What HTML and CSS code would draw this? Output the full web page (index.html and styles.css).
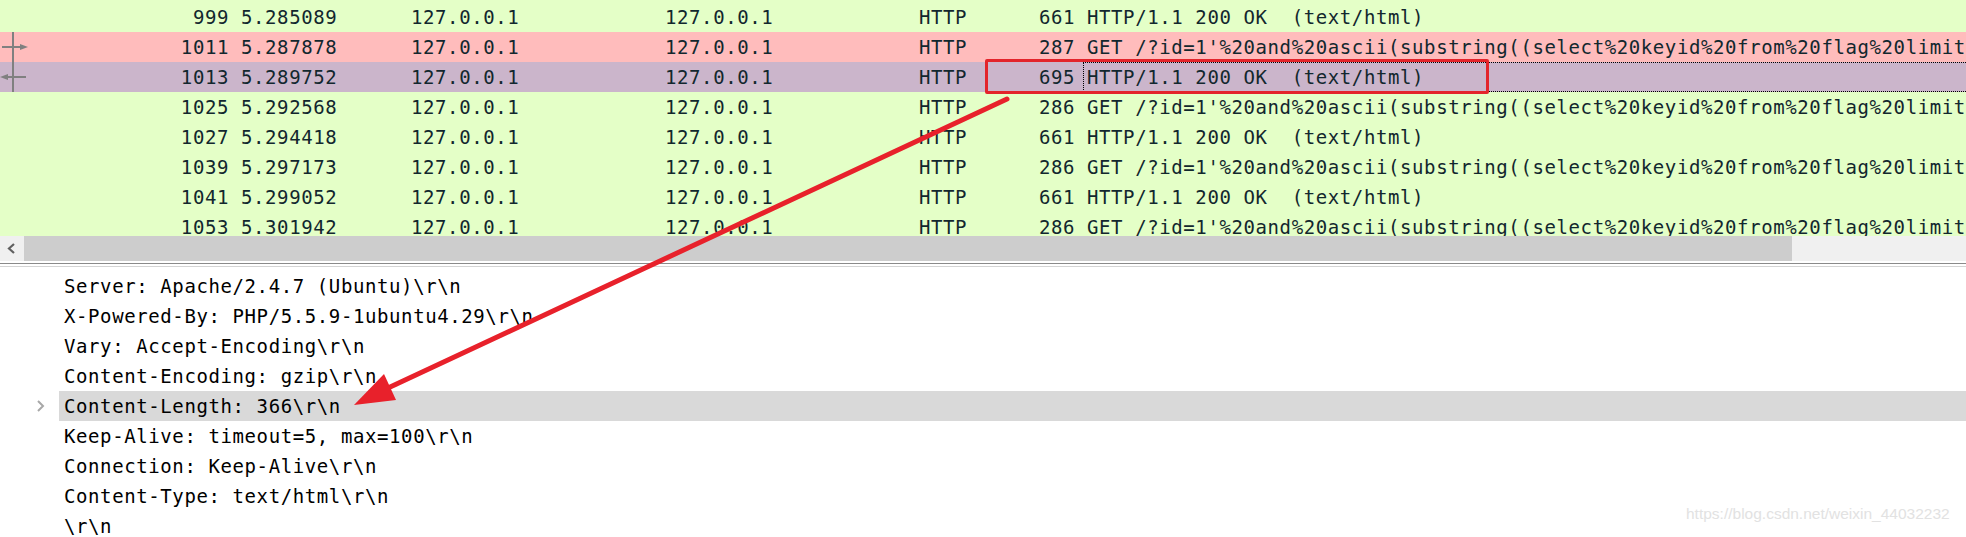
FILE: index.html
```html
<!DOCTYPE html>
<html lang="en">
<head>
	<meta charset="utf-8">
	<title>Wireshark - HTTP</title>
	<link rel="stylesheet" href="styles.css">
</head>
<body>
	<div class="page">
		<div class="packetList">
			<div class="row green">
				<div class="c mark"></div><div class="c no">999</div><div class="c time">5.285089</div><div class="c src">127.0.0.1</div><div class="c dst">127.0.0.1</div><div class="c proto">HTTP</div><div class="c len">661</div><div class="c info">HTTP/1.1 200 OK  (text/html)</div>
			</div>
			<div class="row red">
				<div class="c mark"></div><div class="c no">1011</div><div class="c time">5.287878</div><div class="c src">127.0.0.1</div><div class="c dst">127.0.0.1</div><div class="c proto">HTTP</div><div class="c len">287</div><div class="c info">GET /?id=1'%20and%20ascii(substring((select%20keyid%20from%20flag%20limit</div>
			</div>
			<div class="row selected">
				<div class="c mark"></div><div class="c no">1013</div><div class="c time">5.289752</div><div class="c src">127.0.0.1</div><div class="c dst">127.0.0.1</div><div class="c proto">HTTP</div><div class="c len">695</div><div class="c info focus">HTTP/1.1 200 OK  (text/html)</div>
			</div>
			<div class="row green">
				<div class="c mark"></div><div class="c no">1025</div><div class="c time">5.292568</div><div class="c src">127.0.0.1</div><div class="c dst">127.0.0.1</div><div class="c proto">HTTP</div><div class="c len">286</div><div class="c info">GET /?id=1'%20and%20ascii(substring((select%20keyid%20from%20flag%20limit</div>
			</div>
			<div class="row green">
				<div class="c mark"></div><div class="c no">1027</div><div class="c time">5.294418</div><div class="c src">127.0.0.1</div><div class="c dst">127.0.0.1</div><div class="c proto">HTTP</div><div class="c len">661</div><div class="c info">HTTP/1.1 200 OK  (text/html)</div>
			</div>
			<div class="row green">
				<div class="c mark"></div><div class="c no">1039</div><div class="c time">5.297173</div><div class="c src">127.0.0.1</div><div class="c dst">127.0.0.1</div><div class="c proto">HTTP</div><div class="c len">286</div><div class="c info">GET /?id=1'%20and%20ascii(substring((select%20keyid%20from%20flag%20limit</div>
			</div>
			<div class="row green">
				<div class="c mark"></div><div class="c no">1041</div><div class="c time">5.299052</div><div class="c src">127.0.0.1</div><div class="c dst">127.0.0.1</div><div class="c proto">HTTP</div><div class="c len">661</div><div class="c info">HTTP/1.1 200 OK  (text/html)</div>
			</div>
			<div class="row green">
				<div class="c mark"></div><div class="c no">1053</div><div class="c time">5.301942</div><div class="c src">127.0.0.1</div><div class="c dst">127.0.0.1</div><div class="c proto">HTTP</div><div class="c len">286</div><div class="c info">GET /?id=1'%20and%20ascii(substring((select%20keyid%20from%20flag%20limit</div>
			</div>

			<!-- related packet markers -->
			<svg class="markers" width="40" height="236" viewBox="0 0 40 236">
				<line x1="13" y1="32" x2="13" y2="92" stroke="#808080" stroke-width="2"/>
				<line x1="2" y1="47" x2="22" y2="47" stroke="#808080" stroke-width="2"/>
				<polygon points="20,44 28,47 20,50" fill="#808080"/>
				<line x1="7" y1="77" x2="26" y2="77" stroke="#808080" stroke-width="2"/>
				<polygon points="0,77 8,74 8,80" fill="#808080"/>
			</svg>
		</div>

		<div class="hscroll">
			<div class="sbBtn">
				<svg width="24" height="25" viewBox="0 0 24 25"><polyline points="14,8 9,12.5 14,17" fill="none" stroke="#606060" stroke-width="2.2"/></svg>
			</div>
			<div class="sbThumb"></div>
			<div class="sbTrack"></div>
		</div>

		<div class="splitter"></div>

		<div class="details">
			<div class="line"><div class="exp"></div><div class="txt">Server: Apache/2.4.7 (Ubuntu)\r\n</div></div>
			<div class="line"><div class="exp"></div><div class="txt">X-Powered-By: PHP/5.5.9-1ubuntu4.29\r\n</div></div>
			<div class="line"><div class="exp"></div><div class="txt">Vary: Accept-Encoding\r\n</div></div>
			<div class="line"><div class="exp"></div><div class="txt">Content-Encoding: gzip\r\n</div></div>
			<div class="line"><div class="exp"><svg width="12" height="14" viewBox="0 0 12 14"><polyline points="3,2 8,7 3,12" fill="none" stroke="#a8a8a8" stroke-width="2"/></svg></div><div class="txt hl">Content-Length: 366\r\n</div></div>
			<div class="line"><div class="exp"></div><div class="txt">Keep-Alive: timeout=5, max=100\r\n</div></div>
			<div class="line"><div class="exp"></div><div class="txt">Connection: Keep-Alive\r\n</div></div>
			<div class="line"><div class="exp"></div><div class="txt">Content-Type: text/html\r\n</div></div>
			<div class="line"><div class="exp"></div><div class="txt">\r\n</div></div>
		</div>

		<!-- annotation drawn over the screenshot -->
		<div class="redBox"></div>
		<svg class="annot" width="1966" height="537" viewBox="0 0 1966 537">
			<line x1="1007" y1="99" x2="388" y2="388" stroke="#e8212b" stroke-width="5" stroke-linecap="round"/>
			<polygon points="354,405 396,400 384,374" fill="#e8212b"/>
		</svg>
		<div class="watermark">https://blog.csdn.net/weixin_44032232</div>
	</div>
</body>
</html>
```

FILE: styles.css
```css
*, *:after, *:before {
	box-sizing: border-box;
}
html, body {
	margin: 0;
	background: #fff;
	overflow: hidden;
}
.page {
	position: relative;
	width: 1966px;
	height: 537px;
	overflow: hidden;
	font-family: "DejaVu Sans Mono", monospace;
	font-size: 19px;
	letter-spacing: 0.6px;
}
.packetList {
	position: relative;
	height: 236px;
	padding-top: 2px;
	background: #e4ffc7;
	overflow: hidden;
}
.row {
	display: flex;
	height: 30px;
	line-height: 30px;
	color: #12272e;
}
.green {
	background: #e4ffc7;
}
.red {
	background: #ffbcbc;
}
.selected {
	background: #cbb5cb;
}
.c {
	flex: none;
	height: 30px;
	white-space: pre;
}
.mark {
	width: 40px;
}
.no {
	width: 189px;
	text-align: right;
}
.time {
	width: 182px;
	padding-left: 12px;
}
.src {
	width: 254px;
}
.dst {
	width: 254px;
}
.proto {
	width: 108px;
}
.len {
	width: 52px;
	text-align: right;
	padding-right: 4px;
}
.info {
	flex: 1;
	margin-left: 4px;
	padding-left: 4px;
	overflow: hidden;
}
.focus {
	border: 1px dotted #000;
	border-right: none;
	padding-left: 3px;
	line-height: 28px;
}
.markers {
	position: absolute;
	left: 0;
	top: 0;
}
.hscroll {
	display: flex;
	height: 25px;
}
.sbBtn {
	width: 24px;
	background: #f0f0f0;
}
.sbBtn svg {
	display: block;
}
.sbThumb {
	width: 1768px;
	background: #cdcdcd;
}
.sbTrack {
	flex: 1;
	background: #f0f0f0;
}
.splitter {
	margin-top: 2px;
	height: 4px;
	border-top: 1px solid #8a8a8a;
	border-bottom: 1px solid #d4d4d4;
}
.details {
	padding-top: 4px;
	color: #000;
}
.line {
	display: flex;
	height: 30px;
	line-height: 30px;
}
.exp {
	width: 59px;
	display: flex;
	align-items: center;
	padding-left: 35px;
}
.exp svg {
	display: block;
}
.txt {
	flex: 1;
	padding-left: 5px;
	white-space: pre;
}
.hl {
	background: #d9d9d9;
}
.redBox {
	position: absolute;
	left: 985px;
	top: 59px;
	width: 504px;
	height: 35px;
	border: 3px solid #e3242b;
	border-radius: 2px;
}
.annot {
	position: absolute;
	left: 0;
	top: 0;
}
.watermark {
	position: absolute;
	left: 1686px;
	top: 505px;
	font-family: "Liberation Sans", Arial, sans-serif;
	font-size: 15.5px;
	letter-spacing: 0;
	color: #e2e2e2;
}
```
